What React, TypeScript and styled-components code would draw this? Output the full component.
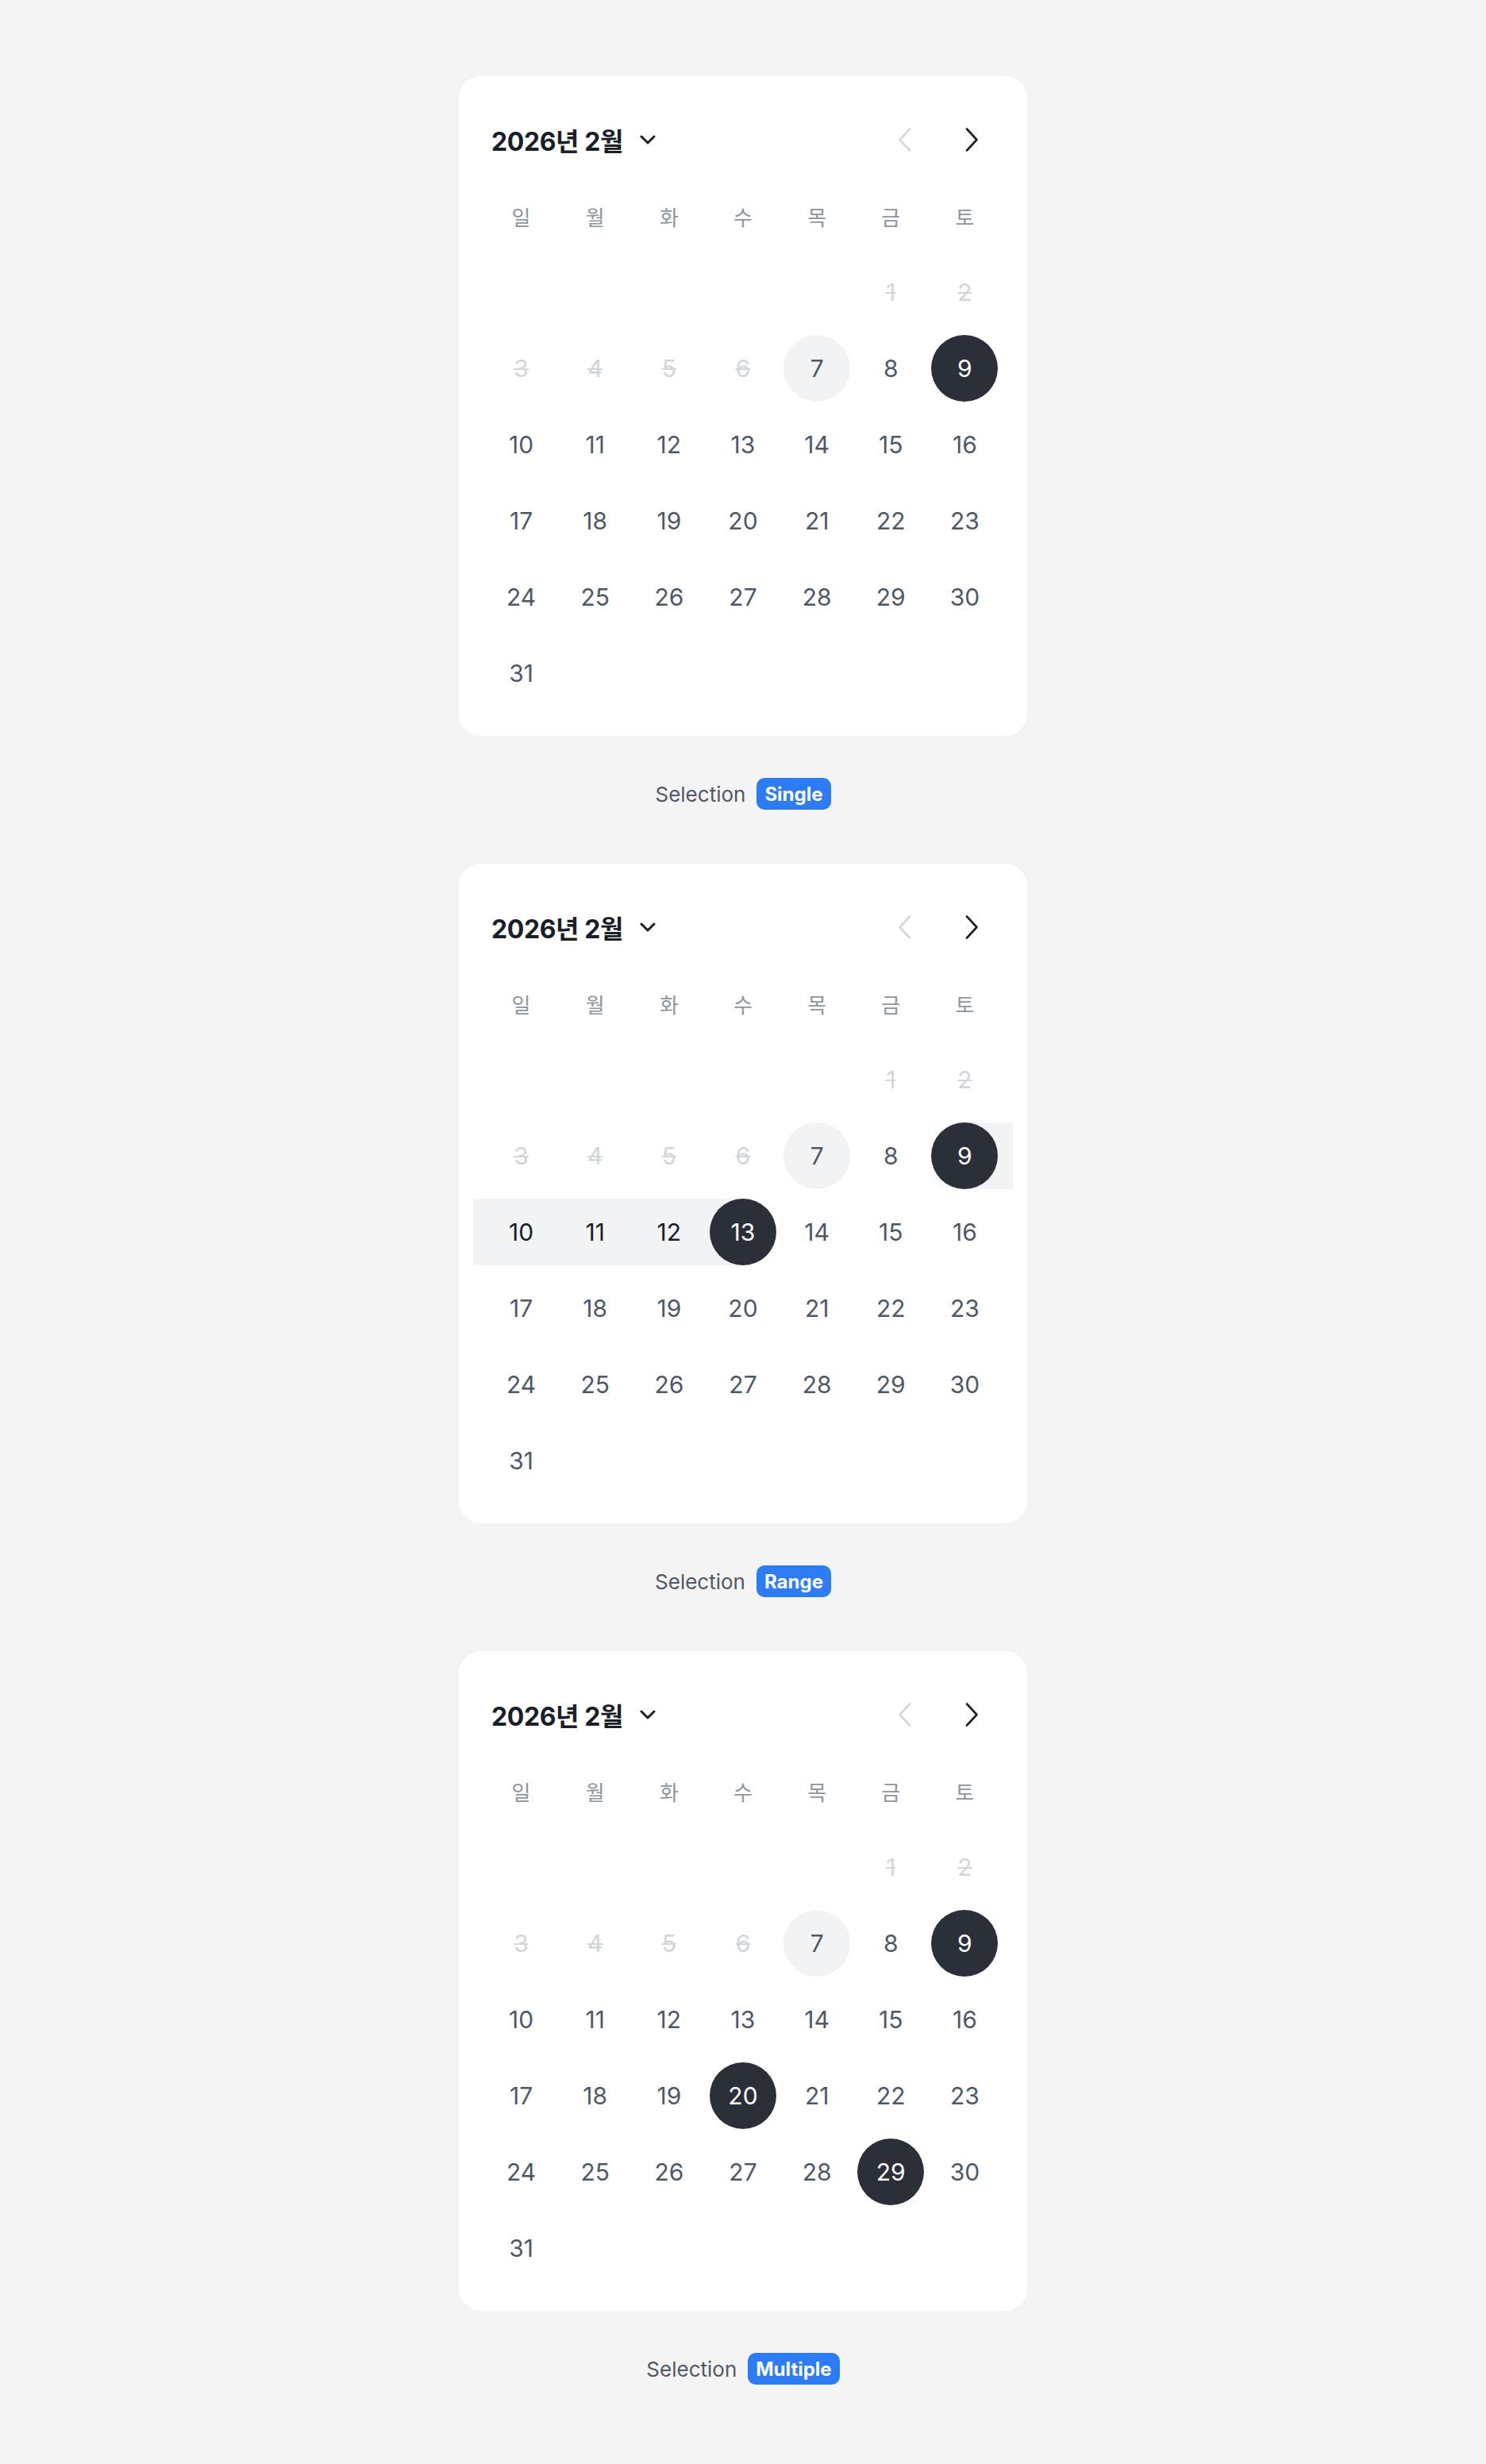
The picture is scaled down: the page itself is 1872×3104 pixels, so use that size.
import styled, { createGlobalStyle } from "styled-components";

const GlobalStyle = createGlobalStyle`
  html, body {
    margin: 0;
    padding: 0;
    background: #f4f4f4;
  }
  body {
    font-family: Inter, "Noto Sans CJK KR", "Noto Sans", sans-serif;
    -webkit-font-smoothing: antialiased;
  }
`;

const Page = styled.div`
  display: flex;
  flex-direction: column;
  align-items: center;
  padding: 96px 0 100px;
  gap: 68px;
`;

const Section = styled.section`
  display: flex;
  flex-direction: column;
  align-items: center;
  gap: 53px;
`;

const Card = styled.div`
  width: 716px;
  box-sizing: border-box;
  background: #ffffff;
  border-radius: 28px;
  padding: 38px 32px 37px;
`;

const Header = styled.div`
  height: 84px;
  margin-bottom: 12px;
  display: flex;
  align-items: center;
  justify-content: space-between;
`;

const MonthButton = styled.button`
  display: flex;
  align-items: center;
  gap: 21px;
  padding: 0 0 0 9px;
  border: 0;
  background: none;
  font-family: Inter, "Noto Sans CJK KR", sans-serif;
  font-size: 32px;
  font-weight: 700;
  letter-spacing: -0.4px;
  color: #191f28;
  cursor: pointer;
`;

const NavGroup = styled.div`
  display: flex;
  gap: 8px;
`;

const NavButton = styled.button<{ $disabled?: boolean }>`
  width: 76px;
  height: 84px;
  display: flex;
  align-items: center;
  justify-content: center;
  border: 0;
  background: none;
  padding: 0;
  color: ${(p) => (p.$disabled ? "#d1d6db" : "#191f28")};
  cursor: ${(p) => (p.$disabled ? "default" : "pointer")};
`;

const Grid = styled.div`
  display: grid;
  grid-template-columns: repeat(7, 1fr);
  grid-auto-rows: 84px;
  row-gap: 12px;
`;

const Weekday = styled.div`
  display: flex;
  align-items: center;
  justify-content: center;
  font-size: 26px;
  color: #8b95a1;
`;

type Band = "none" | "full" | "start" | "end";

const Cell = styled.div<{ $band: Band; $col: number }>`
  position: relative;
  display: flex;
  align-items: center;
  justify-content: center;

  &::before {
    content: "";
    display: ${(p) => (p.$band === "none" ? "none" : "block")};
    position: absolute;
    top: 0;
    bottom: 0;
    left: ${(p) => (p.$band === "start" ? "50%" : p.$col === 0 ? "-14px" : "0")};
    right: ${(p) => (p.$band === "end" ? "50%" : p.$col === 6 ? "-14px" : "0")};
    background: #f2f3f5;
  }
`;

type Mark = "plain" | "today" | "selected" | "disabled" | "range";

const DayMark = styled.span<{ $mark: Mark }>`
  position: relative;
  z-index: 1;
  width: 84px;
  height: 84px;
  border-radius: 50%;
  display: flex;
  align-items: center;
  justify-content: center;
  font-size: 30px;
  font-weight: 400;
  background: ${(p) =>
    p.$mark === "selected" ? "#2b3038" : p.$mark === "today" ? "#f2f3f5" : "transparent"};
  color: ${(p) =>
    p.$mark === "selected"
      ? "#ffffff"
      : p.$mark === "disabled"
      ? "#d1d6db"
      : p.$mark === "range"
      ? "#191f28"
      : "#4e5968"};
  text-decoration: ${(p) => (p.$mark === "disabled" ? "line-through" : "none")};
  text-decoration-thickness: 2px;
`;

const Caption = styled.div`
  height: 40px;
  display: flex;
  align-items: center;
  gap: 14px;
  font-size: 26px;
  color: #4e5968;
`;

const Badge = styled.span`
  height: 40px;
  display: flex;
  align-items: center;
  padding: 0 10px;
  border-radius: 10px;
  background: #2b7cf6;
  color: #ffffff;
  font-size: 24px;
  font-weight: 700;
`;

const WEEKDAYS = ["일", "월", "화", "수", "목", "금", "토"];
const OFFSET = 5;
const TODAY = 7;
const DISABLED_UNTIL = 6;

type Mode =
  | { kind: "single"; selected: number[] }
  | { kind: "range"; start: number; end: number }
  | { kind: "multiple"; selected: number[] };

function ChevronDown() {
  return (
    <svg width="20" height="12" viewBox="0 0 20 12" fill="none">
      <polyline points="2,2 10,10 18,2" stroke="#191f28" strokeWidth="3" strokeLinecap="round" strokeLinejoin="round" />
    </svg>
  );
}

function Arrow({ dir }: { dir: "left" | "right" }) {
  const pts = dir === "left" ? "15,1.5 2.5,15 15,28.5" : "3,1.5 15.5,15 3,28.5";
  return (
    <svg width="18" height="30" viewBox="0 0 18 30" fill="none">
      <polyline points={pts} stroke="currentColor" strokeWidth="2.6" strokeLinecap="round" strokeLinejoin="round" />
    </svg>
  );
}

function Calendar({ mode }: { mode: Mode }) {
  const cells: (number | null)[] = [
    ...Array.from({ length: OFFSET }, () => null),
    ...Array.from({ length: 31 }, (_, i) => i + 1),
  ];

  const markFor = (d: number): Mark => {
    if (mode.kind === "range") {
      if (d === mode.start || d === mode.end) return "selected";
      if (d > mode.start && d < mode.end) return "range";
    } else if (mode.selected.includes(d)) return "selected";
    if (d <= DISABLED_UNTIL) return "disabled";
    if (d === TODAY) return "today";
    return "plain";
  };

  const bandFor = (d: number): Band => {
    if (mode.kind !== "range" || mode.start === mode.end) return "none";
    if (d === mode.start) return "start";
    if (d === mode.end) return "end";
    if (d > mode.start && d < mode.end) return "full";
    return "none";
  };

  return (
    <Card>
      <Header>
        <MonthButton>
          2026년 2월
          <ChevronDown />
        </MonthButton>
        <NavGroup>
          <NavButton $disabled>
            <Arrow dir="left" />
          </NavButton>
          <NavButton>
            <Arrow dir="right" />
          </NavButton>
        </NavGroup>
      </Header>
      <Grid>
        {WEEKDAYS.map((w) => (
          <Weekday key={w}>{w}</Weekday>
        ))}
        {cells.map((d, i) =>
          d === null ? (
            <Cell key={i} $band="none" $col={i % 7} />
          ) : (
            <Cell key={i} $band={bandFor(d)} $col={i % 7}>
              <DayMark $mark={markFor(d)}>{d}</DayMark>
            </Cell>
          )
        )}
      </Grid>
    </Card>
  );
}

const SECTIONS: { label: string; mode: Mode }[] = [
  { label: "Single", mode: { kind: "single", selected: [9] } },
  { label: "Range", mode: { kind: "range", start: 9, end: 13 } },
  { label: "Multiple", mode: { kind: "multiple", selected: [9, 20, 29] } },
];

export default function App() {
  return (
    <>
      <GlobalStyle />
      <Page>
        {SECTIONS.map((s) => (
          <Section key={s.label}>
            <Calendar mode={s.mode} />
            <Caption>
              Selection
              <Badge>{s.label}</Badge>
            </Caption>
          </Section>
        ))}
      </Page>
    </>
  );
}
